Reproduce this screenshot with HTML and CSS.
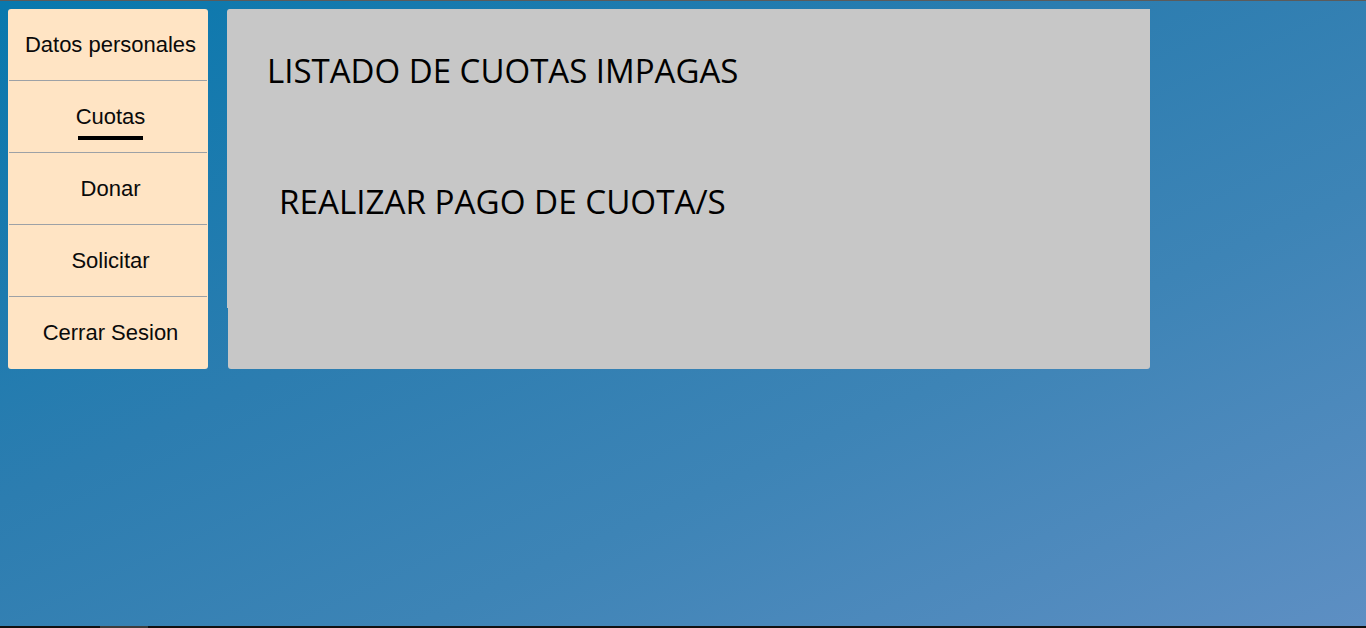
FILE: index.html
```html
<!DOCTYPE html>
<html lang="es">
<head>
<meta charset="utf-8">
<title>Cuotas</title>
<link rel="stylesheet" href="styles.css">
</head>
<body>
<div class="topline"></div>
<div class="page">
  <nav class="sidebar">
    <a class="nav-item">Datos personales</a>
    <a class="nav-item active">Cuotas</a>
    <a class="nav-item">Donar</a>
    <a class="nav-item">Solicitar</a>
    <a class="nav-item">Cerrar Sesion</a>
  </nav>
  <main class="panel">
    <section class="panel-inner">
      <h1 class="title">LISTADO DE CUOTAS IMPAGAS</h1>
      <h2 class="subtitle">REALIZAR PAGO DE CUOTA/S</h2>
    </section>
  </main>
</div>
<div class="bottombar"><span class="thumb"></span></div>
</body>
</html>
```
FILE: styles.css
```css
html, body {
  margin: 0;
  padding: 0;
  height: 100%;
}
body {
  display: flex;
  flex-direction: column;
  height: 100vh;
  background: linear-gradient(to bottom right, #0878ad 0%, #2c7db0 40%, #3d84b6 65%, #5e8fc3 100%);
  font-family: "Liberation Sans", Arial, sans-serif;
  overflow: hidden;
}
.topline {
  height: 1px;
  background: #5b5b5b;
  flex: none;
}
.page {
  flex: 1;
  display: flex;
  align-items: flex-start;
  gap: 20px;
  padding: 8px;
}
.sidebar {
  width: 200px;
  background: #ffe4c4;
  border-radius: 3px;
  display: flex;
  flex-direction: column;
  flex: none;
}
.nav-item {
  position: relative;
  height: 71px;
  display: flex;
  align-items: center;
  justify-content: center;
  padding-left: 5px;
  font-size: 22px;
  color: #0a0a0a;
  text-decoration: none;
  border-bottom: 1px solid #9da1a6;
  margin: 0 1px;
}
.nav-item:last-child {
  border-bottom: none;
  height: 72px;
}
.nav-item.active::after {
  content: "";
  position: absolute;
  left: 69px;
  width: 65px;
  top: 55px;
  height: 4px;
  background: #000;
}
.panel {
  width: 922px;
  height: 360px;
  background: #c7c7c7;
  border-radius: 3px;
  flex: none;
}
.panel-inner {
  height: 299px;
  margin-left: -1px;
  background: #c7c7c7;
  border-radius: 3px 0 0 0;
  padding-top: 40px;
  box-sizing: border-box;
}
.title {
  margin: 0 0 0 40px;
  font-family: "Open Sans", "Noto Sans", sans-serif;
  font-weight: 400;
  font-size: 33px;
  line-height: 44px;
  color: #000;
}
.subtitle {
  margin: 87px 0 0 52px;
  font-family: "Open Sans", "Noto Sans", sans-serif;
  font-weight: 400;
  font-size: 33.2px;
  line-height: 44px;
  color: #000;
}
.bottombar {
  height: 2px;
  background: #111;
  flex: none;
  position: relative;
}
.thumb {
  position: absolute;
  left: 100px;
  width: 48px;
  top: 0;
  height: 2px;
  background: #3d3d3d;
}
```
